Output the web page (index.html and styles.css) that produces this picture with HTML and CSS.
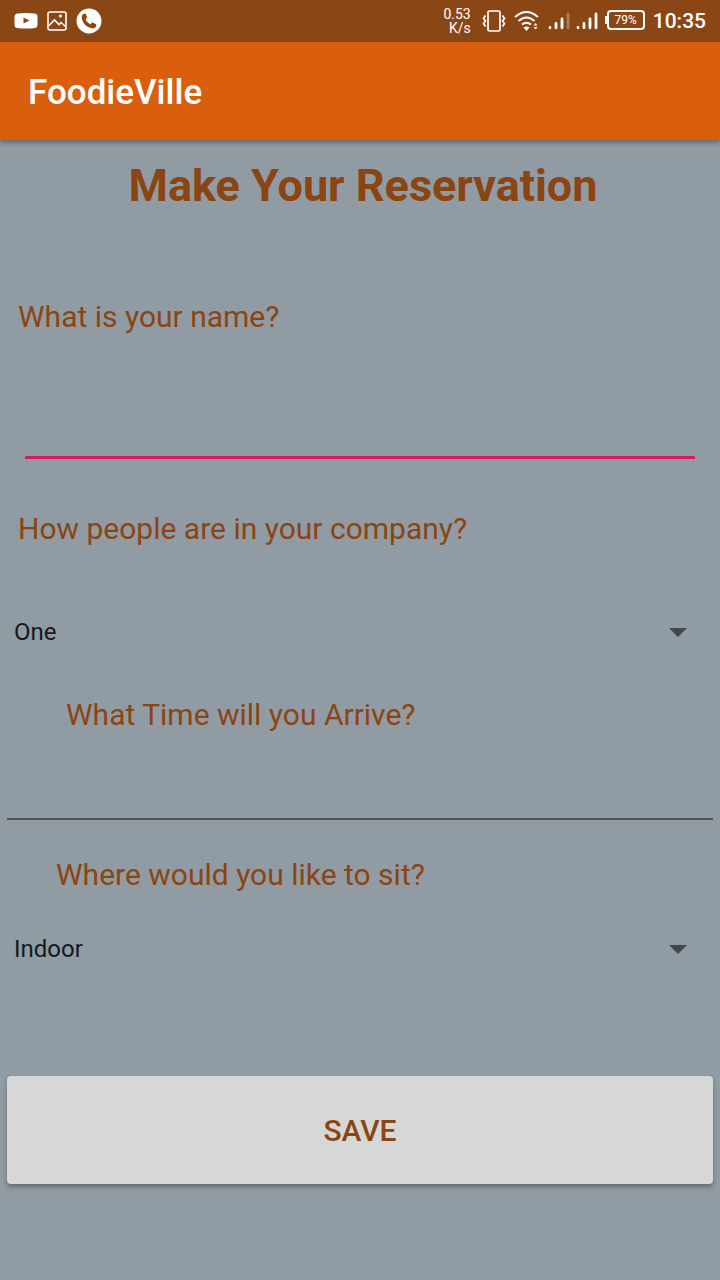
FILE: index.html
```html
<!DOCTYPE html>
<html lang="en">
<head>
<meta charset="utf-8">
<meta name="viewport" content="width=device-width, initial-scale=1">
<title>FoodieVille</title>
<link rel="stylesheet" href="styles.css">
</head>
<body>
<div class="status">
  <div class="notices">
    <svg width="24" height="18" viewBox="0 0 24 18"><path fill="#fff" d="M3 1.500Q12 .5 21 1.500Q23.500 2 23.500 4.500V12.500Q23.500 15.500 21 16Q12 17 3 16Q.5 15.500 .5 12.500V4.500Q.5 2 3 1.500Z"/><path fill="#8b4513" d="M9.500 5.500v6l6-3z"/></svg>
    <svg width="20" height="20" viewBox="0 0 20 20" fill="none" stroke="#fff" stroke-width="1.600"><rect x="1" y="1" width="18" height="18" rx="2"/><path d="M1.500 15l6-6 4.500 4.500 2-2 4.500 4"/><circle cx="13.500" cy="5" r=".8" fill="#fff"/></svg>
    <svg width="26" height="26" viewBox="0 0 26 26"><circle cx="13" cy="13" r="12.500" fill="#fff"/><path fill="#8b4513" d="M8.200 5.500Q9.500 5.300 10 6.500l1 2.500q.3 1-.8 1.800l-.7.600q1.500 3.200 4.800 5l1.100-1.300q.7-.8 1.700-.3l2.600 1.300q1 .6.600 1.800q-.8 2.400-3.300 2.500C11 20.200 5.700 14.500 5.700 9Q5.800 6.200 8.200 5.500Z"/></svg>
  </div>
  <div class="speed"><span>0.53</span><span>K/s</span></div>
  <svg class="vibrate" width="24" height="24" viewBox="0 0 24 24" fill="none" stroke="#fff" stroke-width="1.700"><rect x="6" y="2" width="12" height="20" rx="1.500"/><path d="M3.500 6.500L1.500 9.500l2 2.500-2 2.500 2 3M20.500 6.500l2 3-2 2.500 2 2.500-2 3"/></svg>
  <svg class="wifi" width="26" height="22" viewBox="0 0 26 22" fill="none" stroke="#fff" stroke-width="2"><path d="M1 7Q12.500-3 24 7M4.500 11Q12.500 4 20.500 11M8 14.500Q12.500 11 17 14.500"/><path fill="#fff" stroke="none" d="M9.500 17.500Q12.500 15.500 15.500 17.500L12.500 21zM19.500 15.500l2-2.500 2 2.500zM19.500 17h4l-2 2.500z"/></svg>
  <svg class="signal" width="22" height="18" viewBox="0 0 22 18" stroke="#fff" stroke-width="2.800" stroke-linecap="round"><path d="M2 15.500v.3M8 11.500v4.300M14 7v8.800"/><path opacity=".3" d="M20 2v13.800"/></svg>
  <svg class="signal2" width="22" height="18" viewBox="0 0 22 18" stroke="#fff" stroke-width="2.800" stroke-linecap="round"><path d="M2 15.500v.3M8 11.500v4.300M14 7v8.800M20 2v13.800"/></svg>
  <div class="battery"><i class="pole"></i><span class="cell">79%</span></div>
  <time class="clock">10:35</time>
</div>
<header class="appbar">FoodieVille</header>
<form class="form">
  <h1 class="title">Make Your Reservation</h1>
  <label class="label" for="name">What is your name?</label>
  <input class="name" id="name" type="text">
  <label class="label" for="people">How people are in your company?</label>
  <div class="spinner people">
    <select id="people"><option>One</option></select>
    <svg width="18" height="9" viewBox="0 0 18 9"><path fill="#43474b" d="M0 0h18L9 9z"/></svg>
  </div>
  <label class="label label-time" for="time">What Time will you Arrive?</label>
  <input class="time" id="time" type="text">
  <label class="label label-seat" for="seat">Where would you like to sit?</label>
  <div class="spinner seat">
    <select id="seat"><option>Indoor</option></select>
    <svg width="18" height="9" viewBox="0 0 18 9"><path fill="#43474b" d="M0 0h18L9 9z"/></svg>
  </div>
  <button class="save" type="button">SAVE</button>
</form>
</body>
</html>
```
FILE: styles.css
```css
* { box-sizing: border-box; }
body {
  margin: 0;
  min-height: 100vh;
  background: #919ba3;
  color: #8b4513;
  font-family: Roboto, sans-serif;
}
svg { display: block; flex: none; }
.status {
  position: relative;
  z-index: 1;
  display: flex;
  align-items: center;
  height: 42px;
  padding: 0 14px;
  background: #8b4616;
  color: #fff;
}
.notices {
  display: flex;
  align-items: center;
  gap: 9px;
  margin-right: auto;
}
.speed {
  display: flex;
  flex-direction: column;
  align-items: flex-end;
  font-size: 14px;
  line-height: 14px;
}
.vibrate { margin-left: 11px; }
.wifi { margin-left: 8px; }
.signal { margin-left: 8px; }
.signal2 { margin-left: 6px; }
.battery {
  display: flex;
  align-items: center;
  margin-left: 7px;
  padding-bottom: 2px;
}
.pole {
  width: 2px;
  height: 8px;
  background: #fff;
}
.cell {
  width: 38px;
  height: 20px;
  border: 2px solid #fff;
  border-radius: 4px;
  font-size: 12px;
  line-height: 16px;
  text-align: center;
}
.clock {
  margin-left: 8px;
  font-size: 21px;
  font-weight: 500;
}
.appbar {
  position: relative;
  height: 98px;
  padding: 0 28px;
  background: #d95f0c;
  box-shadow: 0 2px 6px rgba(0, 0, 0, .4);
  color: #fff;
  font-size: 35px;
  font-weight: 500;
  line-height: 101px;
}
.form {
  display: flex;
  flex-direction: column;
  padding-bottom: 32px;
}
.title {
  margin: 18px 0 84px 6px;
  font-size: 45px;
  font-weight: 700;
  line-height: 56px;
  text-align: center;
}
.label {
  padding: 0 18px;
  font-size: 30px;
  line-height: 38px;
}
.name, .time {
  border: 0;
  border-radius: 0;
  background: none;
  color: #1b1d1f;
  font: 30px Roboto, sans-serif;
  outline: 0;
}
.name {
  height: 78px;
  margin: 45px 25px 51px;
  border-bottom: 3px solid #d81b60;
}
.time {
  height: 70px;
  margin: 16px 7px 36px;
  border-bottom: 2px solid #4d5359;
}
.spinner {
  display: grid;
  align-items: center;
  height: 48px;
}
.spinner > * { grid-area: 1 / 1; }
.spinner svg {
  justify-self: end;
  margin-right: 33px;
  pointer-events: none;
}
.spinner select {
  appearance: none;
  width: 100%;
  height: 48px;
  padding: 0 60px 0 14px;
  border: 0;
  background: none;
  color: #16181a;
  font: 24px Roboto, sans-serif;
}
.people { margin: 60px 0 40px; }
.seat { margin: 31px 0 103px; }
.label-time { padding-left: 66px; }
.label-seat { padding-left: 56px; }
.save {
  height: 108px;
  margin: 0 7px;
  border: 0;
  border-radius: 4px;
  background: #d6d8d7;
  box-shadow: 0 3px 4px rgba(0, 0, 0, .3);
  color: #8b4513;
  font: 500 30px Roboto, sans-serif;
}
```
